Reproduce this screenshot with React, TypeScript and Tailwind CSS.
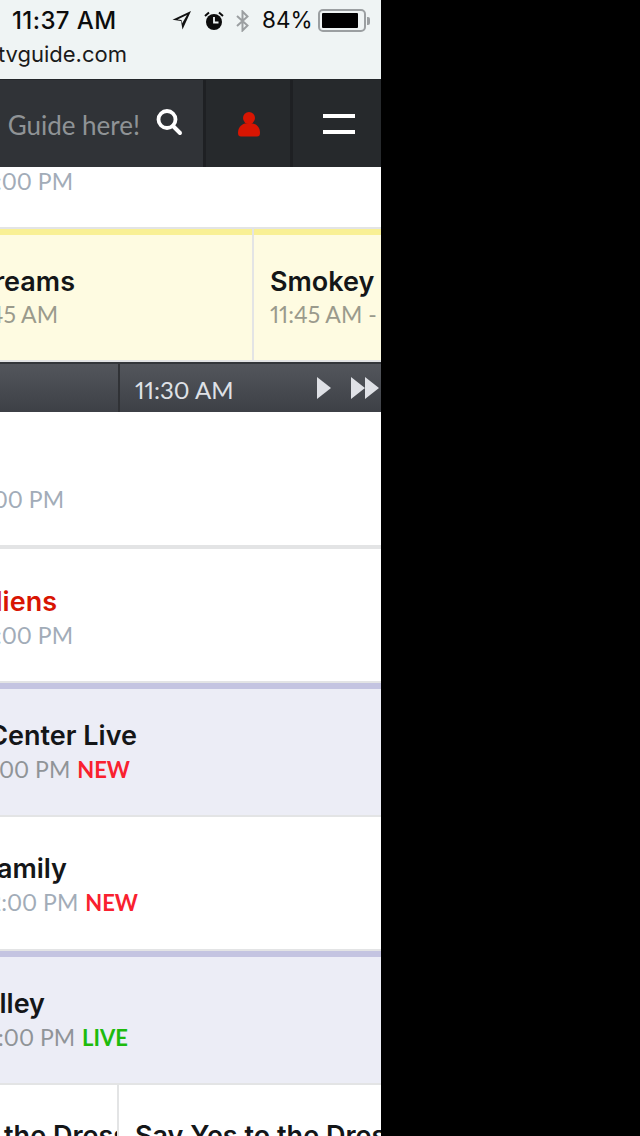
import React from "react";

const TITLE = "whitespace-nowrap font-['Inter',sans-serif] text-[27px] font-semibold leading-[32px]";

function Row({ title, titleEnd, time, metaEnd, tag, tagColor, titleColor = "text-[#141618]", metaColor = "text-[#a2acb8]", rowClass }: {
  title: string; titleEnd: string; time: string; metaEnd: string; tag?: string; tagColor?: string; titleColor?: string; metaColor?: string; rowClass: string;
}) {
  return (
    <div className={`flex shrink-0 flex-col justify-center overflow-hidden ${rowClass}`}>
      <div className={`flex justify-end ${titleEnd}`}>
        <div className={`${TITLE} ${titleColor}`}>{title}</div>
      </div>
      <div className={`mt-[2px] flex justify-end ${metaEnd}`}>
        <div className={`whitespace-nowrap text-[23px] leading-[30px] ${metaColor}`}>
          {time}
          {tag ? <span className={`ml-[7px] text-[22px] font-bold ${tagColor}`}>{tag}</span> : null}
        </div>
      </div>
    </div>
  );
}

export default function App() {
  return (
    <div className="flex h-[1136px] w-[640px] overflow-hidden bg-black font-['Lato',sans-serif] proportional-nums">
      <div className="flex h-full w-[381px] flex-col overflow-hidden bg-white">
        {/* Status + URL */}
        <div className="h-[79px] shrink-0 bg-[#eff4f4]">
          <div className="flex h-[41px] items-center pl-[12px] font-['Inter',sans-serif]">
            <span className="w-[105px] whitespace-nowrap text-[24px] font-medium leading-none tracking-[0.4px] text-[#0c0c0c]">11:37 AM</span>
            <svg className="ml-[54px] shrink-0" width="21" height="21" viewBox="0 0 21 21">
              <path d="M20 1 L1.500 9.700 L10 11 L11.500 19.500 Z M16 5 L11 13.500 L10.500 10 L6.500 9.500 Z" fill="#111" fillRule="evenodd" />
            </svg>
            <svg className="ml-[12px] shrink-0" width="20" height="20" viewBox="0 0 20 20">
              <circle cx="10" cy="11" r="8" fill="#0c0c0c" />
              <path d="M10 6 V11.500 H14.500" stroke="#eff4f4" strokeWidth="1.800" fill="none" />
              <path d="M1 5 L5 1.500 M19 5 L15 1.500" stroke="#0c0c0c" strokeWidth="2" />
            </svg>
            <svg className="ml-[11px] shrink-0" width="15" height="22" viewBox="0 0 15 22">
              <path d="M2 6 L12.500 15.500 L7.500 20.500 V1.500 L12.500 6.500 L2 16" stroke="#9b9fa1" strokeWidth="2" fill="none" />
            </svg>
            <span className="ml-[12px] w-[48px] whitespace-nowrap text-[22.5px] leading-none text-[#0c0c0c]">84%</span>
            <div className="ml-[8px] flex h-[23px] w-[48px] shrink-0 items-center rounded-[5px] border-[2px] border-[#9b9fa1] pl-[2px]">
              <div className="h-[15px] w-[36px] rounded-[1px] bg-black" />
            </div>
            <div className="ml-[1px] h-[8px] w-[3px] shrink-0 rounded-r-[2px] bg-[#9b9fa1]" />
          </div>
          <div className="flex w-[127px] justify-end">
            <div className="whitespace-nowrap font-['Inter',sans-serif] text-[22px] leading-[26px] text-[#1a1a1a]">www.tvguide.com</div>
          </div>
        </div>

        {/* Dark header */}
        <div className="flex h-[88px] shrink-0 border-t border-[#23262a] bg-[#26292c]">
          <div className="flex w-[203px] items-center justify-end overflow-hidden bg-[#303337] pr-[20px]">
            <span className="mt-[2px] whitespace-nowrap text-[26px] leading-none text-[#8f9396]">Guide here!</span>
            <svg className="mb-[4px] ml-[15px] shrink-0" width="28" height="28" viewBox="0 0 28 28">
              <circle cx="12" cy="11.500" r="8.500" fill="none" stroke="#fff" strokeWidth="3.800" />
              <path d="M18 18 L25 25" stroke="#fff" strokeWidth="4" strokeLinecap="round" />
            </svg>
          </div>
          <div className="flex w-[90px] items-center justify-center border-x-[3px] border-[#1e2023] pl-[1px]">
            <svg width="24" height="26" viewBox="0 0 24 26">
              <circle cx="12" cy="7" r="6" fill="#d81502" />
              <path d="M1 22 C1 15 6 12 12 12 C18 12 23 15 23 22 C23 24.500 22 25.500 20 25.500 H4 C2 25.500 1 24.500 1 22 Z" fill="#d81502" />
            </svg>
          </div>
          <div className="flex flex-1 flex-col items-center justify-center gap-[12px] pl-[3px]">
            <div className="h-[4px] w-[32px] bg-white" />
            <div className="h-[4px] w-[32px] bg-white" />
          </div>
        </div>

        {/* Partial first row */}
        <div className="h-[60px] shrink-0 overflow-hidden bg-white">
          <div className="flex w-[73px] justify-end">
            <div className="whitespace-nowrap text-[23px] leading-[28px] text-[#a2acb8]">12:00 PM</div>
          </div>
        </div>

        {/* Yellow row */}
        <div className="flex h-[135px] shrink-0 border-y-2 border-[#e3e4e5] bg-[#fefbe1]">
          <div className="w-[252px] shrink-0 overflow-hidden border-t-[6px] border-[#f9f095]">
            <div className="flex h-full flex-col justify-center">
              <div className="flex w-[75px] justify-end">
                <div className={`${TITLE} text-[#141618]`}>Field of Dreams</div>
              </div>
              <div className="mt-[1px] flex w-[58px] justify-end">
                <div className="whitespace-nowrap text-[23px] leading-[30px] text-[#9a9a8c]">9:45 - 11:45 AM</div>
              </div>
            </div>
          </div>
          <div className="w-[2px] shrink-0 bg-[#e3e4e5]" />
          <div className="flex-1 overflow-hidden border-t-[6px] border-[#f9f095]">
            <div className="flex h-full flex-col justify-center pl-[16px]">
              <div className={`${TITLE} text-[#141618]`}>Smokey and the Bandit</div>
              <div className="mt-[1px] whitespace-nowrap text-[23px] leading-[30px] text-[#9a9a8c]">11:45 AM - 2:00 PM</div>
            </div>
          </div>
        </div>

        {/* Time bar */}
        <div className="flex h-[50px] shrink-0 border-t-2 border-[#34373b] bg-gradient-to-b from-[#53565c] to-[#3d4046]">
          <div className="w-[118px] shrink-0" />
          <div className="w-[2px] shrink-0 bg-[#303236]" />
          <div className="flex min-w-0 flex-1 items-center pl-[15px]">
            <span className="mt-[3px] w-[98px] shrink-0 whitespace-nowrap text-[24px] leading-none text-[#dfe1e6]">11:30 AM</span>
            <svg className="ml-[83px] shrink-0" width="15" height="22" viewBox="0 0 15 22"><path d="M1 0 L15 11 L1 22 Z" fill="#dfe1e6" /></svg>
            <svg className="ml-[20px] shrink-0" width="28" height="22" viewBox="0 0 28 22"><path d="M0 0 L14 11 L0 22 Z M14 0 L28 11 L14 22 Z" fill="#dfe1e6" /></svg>
          </div>
        </div>

        <Row rowClass="h-[133px] bg-white pt-[7px]" title={"\u00a0"} titleEnd="w-[64px]" time="1:00 PM" metaEnd="w-[64px]" />
        <div className="h-[4px] shrink-0 bg-[#e3e4e5]" />
        <Row rowClass="h-[132px] bg-white pt-[5px]" title="Ancient Aliens" titleEnd="w-[57px]" titleColor="text-[#d81502]" time="12:00 PM" metaEnd="w-[73px]" />
        <div className="h-[2px] shrink-0 bg-[#e3e4e5]" />
        <div className="h-[6px] shrink-0 bg-[#c4c4e1]" />
        <Row rowClass="h-[126px] bg-[#ecedf6]" title="SportsCenter Live" titleEnd="w-[137px]" time="12:00 PM" metaEnd="w-[130px]" metaColor="text-[#909498]" tag="NEW" tagColor="text-[#f9212f]" />
        <div className="h-[2px] shrink-0 bg-[#e3e4e5]" />
        <Row rowClass="h-[132px] bg-white pt-[5px]" title="Modern Family" titleEnd="w-[67px]" time="12:00 PM" metaEnd="w-[138px]" tag="NEW" tagColor="text-[#f9212f]" />
        <div className="h-[2px] shrink-0 bg-[#e3e4e5]" />
        <div className="h-[6px] shrink-0 bg-[#c4c4e1]" />
        <Row rowClass="h-[126px] bg-[#ecedf6]" title="Silicon Valley" titleEnd="w-[45px]" time="12:00 PM" metaEnd="w-[128px]" metaColor="text-[#909498]" tag="LIVE" tagColor="text-[#1dbb0c]" />
        <div className="h-[2px] shrink-0 bg-[#e3e4e5]" />

        {/* Bottom partial row */}
        <div className="flex flex-1 overflow-hidden bg-white">
          <div className="w-[117px] shrink-0 overflow-hidden pt-[35px]">
            <div className={`-ml-[138px] ${TITLE} text-[#141618]`}>Say Yes to the Dress</div>
          </div>
          <div className="w-[2px] shrink-0 bg-[#e3e4e5]" />
          <div className="flex-1 overflow-hidden pl-[16px] pt-[35px]">
            <div className={`${TITLE} text-[#141618]`}>Say Yes to the Dress</div>
          </div>
        </div>
      </div>
    </div>
  );
}
